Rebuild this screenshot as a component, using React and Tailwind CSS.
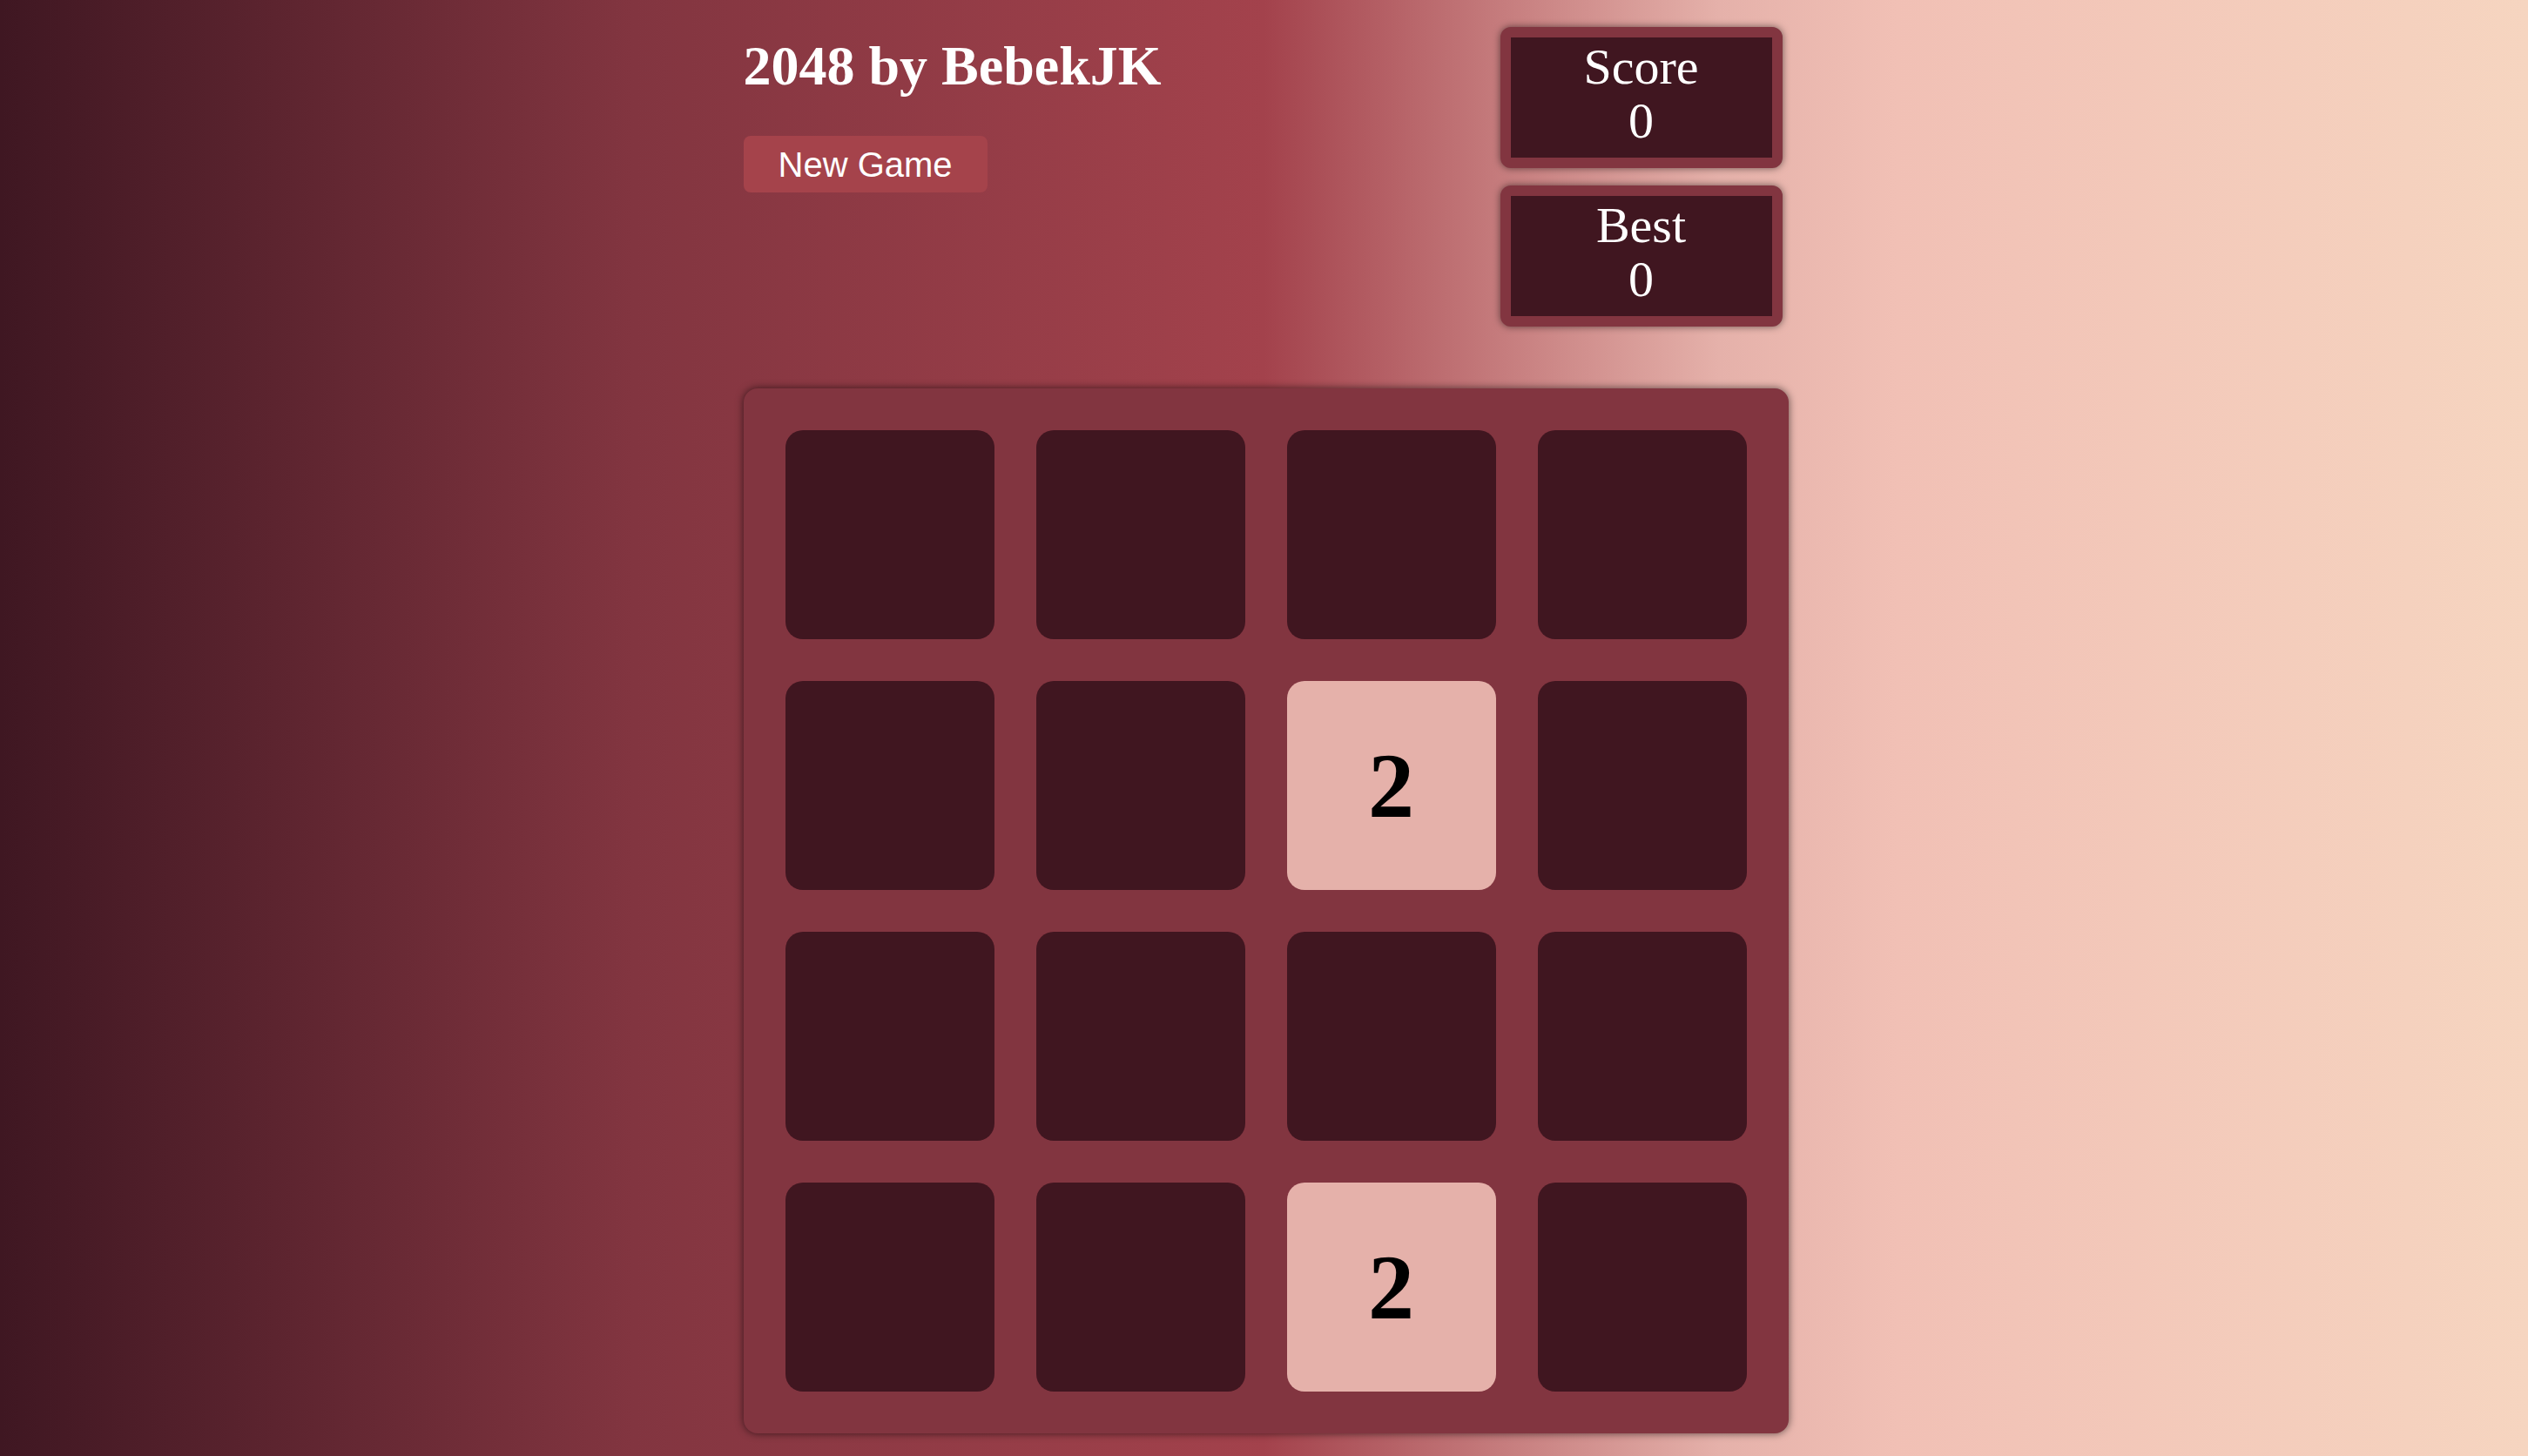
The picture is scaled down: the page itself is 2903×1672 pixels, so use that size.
import React from "react";

const board = [
  [0, 0, 0, 0],
  [0, 0, 2, 0],
  [0, 0, 0, 0],
  [0, 0, 2, 0],
];

function ScoreBox({ label, value }) {
  return (
    <div className="w-[324px] h-[162px] rounded-[12px] border-[12px] border-[#823540] bg-[#401620] shadow-[0_0_8px_rgba(0,0,0,0.55)] flex flex-col items-center pt-[3px] text-white text-[58px] leading-[62px] font-['Liberation_Serif',serif]">
      <div>{label}</div>
      <div>{value}</div>
    </div>
  );
}

export default function App() {
  return (
    <div className="min-h-screen w-full bg-[linear-gradient(to_right,#3f1722_0%,#823540_25%,#a3424c_50%,#e5b1aa_68%,#f1c0b5_75%,#f6d5c0_100%)]">
      <div className="w-[1204px] mx-auto pl-[4px] pb-[24px]">
        <div className="flex justify-between items-start">
          <div className="flex flex-col items-start">
            <h1 className="mt-[40px] mb-[45px] text-white font-bold text-[64px] leading-[71px] font-['Liberation_Serif',serif]">
              2048 by BebekJK
            </h1>
            <button className="h-[65px] px-[40px] rounded-[8px] bg-[#a5434b] text-white text-[40px] leading-none font-['Liberation_Sans',Arial,sans-serif] flex items-center">
              New Game
            </button>
          </div>
          <div className="mt-[31px] mr-[7px] flex flex-col gap-[20px]">
            <ScoreBox label="Score" value="0" />
            <ScoreBox label="Best" value="0" />
          </div>
        </div>
        <div className="mt-[71px] w-[1200px] h-[1200px] rounded-[16px] bg-[#823540] shadow-[0_0_10px_rgba(0,0,0,0.6)] p-[48px] grid grid-cols-4 grid-rows-4 gap-[48px]">
          {board.flat().map((v, i) => (
            <div
              key={i}
              className={
                v
                  ? "rounded-[20px] bg-[#e5b1aa] flex items-center justify-center text-black font-bold text-[106px] font-['Liberation_Serif',serif]"
                  : "rounded-[20px] bg-[#401620]"
              }
            >
              {v ? v : null}
            </div>
          ))}
        </div>
      </div>
    </div>
  );
}
